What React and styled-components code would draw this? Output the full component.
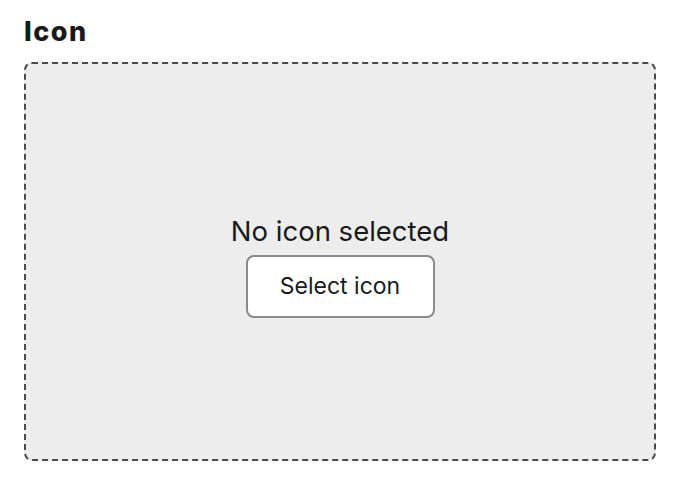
import React from 'react'
import styled, { createGlobalStyle } from 'styled-components'

const GlobalStyle = createGlobalStyle`
  body {
    margin: 0;
    background: #fff;
    font-family: Inter, 'Noto Sans', sans-serif;
    color: #1a1a1a;
  }
`

const Page = styled.div`
  padding: 14px 24px 0 24px;
`

const Label = styled.h2`
  margin: 0 0 12px 0;
  font-size: 27px;
  font-weight: 800;
  line-height: 36px;
  letter-spacing: 1.5px;
`

const DropZone = styled.div`
  width: 632px;
  height: 399px;
  box-sizing: border-box;
  border: 2px dashed #4a4a4a;
  border-radius: 8px;
  background: #ededed;
  display: flex;
  flex-direction: column;
  align-items: center;
  justify-content: center;
  gap: 8px;
  padding-top: 9px;
`

const Empty = styled.p`
  margin: 0;
  font-size: 27.5px;
  line-height: 32px;
`

const SelectButton = styled.button`
  width: 189px;
  height: 63px;
  border: 2px solid #8a8a8a;
  border-radius: 8px;
  background: #fff;
  font-family: inherit;
  font-size: 23px;
  color: #1a1a1a;
  cursor: pointer;
`

const App = () => {
  return (
    <Page>
      <GlobalStyle />
      <Label>Icon</Label>
      <DropZone>
        <Empty>No icon selected</Empty>
        <SelectButton type='button'>Select icon</SelectButton>
      </DropZone>
    </Page>
  )
}

export default App
